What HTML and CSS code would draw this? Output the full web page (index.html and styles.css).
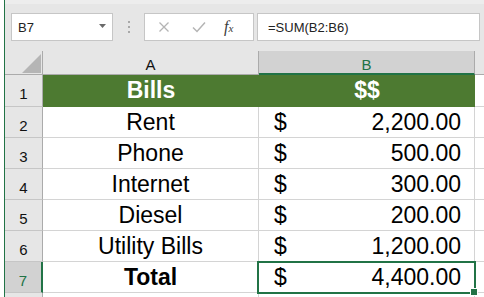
FILE: index.html
```html
<!DOCTYPE html>
<html>
<head>
<meta charset="utf-8">
<link rel="stylesheet" href="styles.css">
</head>
<body>
<div class="app">
  <div class="topstrip"></div>
  <div class="toolbar">
    <div class="namebox">
      <span class="nametext">B7</span>
      <svg class="dd" width="7" height="4" viewBox="0 0 7 4"><path d="M0 0H7L3.5 4Z" fill="#6a6a6a"/></svg>
    </div>
    <div class="dots"><span></span><span></span><span></span></div>
    <div class="fbtns">
      <svg class="ic" width="12" height="12" viewBox="0 0 12 12"><path d="M1.5 1.5L10.5 10.5M10.5 1.5L1.5 10.5" stroke="#b4b4b4" stroke-width="1.3" fill="none"/></svg>
      <svg class="ic" width="14" height="12" viewBox="0 0 14 12"><path d="M1 6.5L5 10.5L13 1.5" stroke="#b4b4b4" stroke-width="1.5" fill="none"/></svg>
      <span class="fx">f<span class="fxx">x</span></span>
    </div>
    <div class="finput">=SUM(B2:B6)</div>
  </div>
  <div class="grid">
    <div class="corner"><svg width="19" height="19" viewBox="0 0 19 19"><path d="M19 0V19H0Z" fill="#b5b5b5"/></svg></div>
    <div class="colh">A</div>
    <div class="colh sel">B</div>
    <div class="colh rest"></div>

    <div class="rowh r1">1</div>
    <div class="cell hdr">Bills</div>
    <div class="cell hdr">$$</div>
    <div class="cell hdr rest"></div>

    <div class="rowh">2</div>
    <div class="cell ca">Rent</div>
    <div class="cell cb"><span>$</span><span>2,200.00</span></div>
    <div class="cell rest"></div>

    <div class="rowh">3</div>
    <div class="cell ca">Phone</div>
    <div class="cell cb"><span>$</span><span>500.00</span></div>
    <div class="cell rest"></div>

    <div class="rowh">4</div>
    <div class="cell ca">Internet</div>
    <div class="cell cb"><span>$</span><span>300.00</span></div>
    <div class="cell rest"></div>

    <div class="rowh">5</div>
    <div class="cell ca">Diesel</div>
    <div class="cell cb"><span>$</span><span>200.00</span></div>
    <div class="cell rest"></div>

    <div class="rowh">6</div>
    <div class="cell ca">Utility Bills</div>
    <div class="cell cb"><span>$</span><span>1,200.00</span></div>
    <div class="cell rest"></div>

    <div class="rowh selr">7</div>
    <div class="cell ca bold">Total</div>
    <div class="cell cb active"><span>$</span><span>4,400.00</span></div>
    <div class="cell rest"></div>

    <div class="rowh tail"></div>
    <div class="cell tail"></div>
    <div class="cell tail"></div>
    <div class="cell rest tail"></div>
  </div>
</div>
</body>
</html>
```

FILE: styles.css
```css
* { box-sizing: border-box; }
html, body { margin: 0; padding: 0; }
body {
  width: 484px;
  height: 297px;
  overflow: hidden;
  background: #ffffff;
  font-family: "Liberation Sans", Arial, sans-serif;
}
.app {
  margin-left: 4px;
  border-left: 1px solid #217346;
  height: 297px;
  overflow: hidden;
  background: #e6e6e6;
}
.topstrip {
  height: 4px;
  background: #ededed;
}
.toolbar {
  height: 47px;
  display: flex;
  align-items: flex-start;
  padding-top: 9px;
}
.namebox {
  margin-left: 6px;
  width: 102px;
  height: 28px;
  background: #fff;
  border: 1px solid #c6c6c6;
  display: flex;
  align-items: center;
  justify-content: space-between;
  padding: 0 6px 0 6px;
}
.nametext {
  font-size: 13px;
  color: #222;
  padding-top: 1px;
}
.dd { margin-top: -2px; }
.dots {
  width: 31px;
  height: 28px;
  display: flex;
  flex-direction: column;
  align-items: center;
  justify-content: center;
  gap: 3px;
}
.dots span {
  width: 2px;
  height: 2px;
  background: #a8a8a8;
}
.fbtns {
  width: 110px;
  height: 28px;
  background: #fff;
  border: 1px solid #c6c6c6;
  display: flex;
  align-items: center;
  padding-left: 13px;
  gap: 22px;
}
.fx {
  font-family: "Liberation Serif", "Times New Roman", serif;
  font-style: italic;
  font-size: 16px;
  color: #3c3c3c;
  margin-left: -4px;
}
.fxx { font-size: 11px; }
.finput {
  margin-left: 3px;
  width: 223px;
  height: 28px;
  background: #fff;
  border: 1px solid #c6c6c6;
  font-size: 13px;
  color: #222;
  padding-left: 10px;
  line-height: 28px;
}
.grid {
  display: grid;
  grid-template-columns: 38px 216px 216px 1fr;
  grid-template-rows: 24px 32px repeat(6, 31px) 31px;
  height: 277px;
}
.corner {
  border-right: 1px solid #ababab;
  border-bottom: 1px solid #ababab;
  display: flex;
  align-items: flex-end;
  justify-content: flex-end;
  padding: 0 1px 1px 0;
}
.colh {
  background: #e6e6e6;
  border-right: 1px solid #ababab;
  border-bottom: 1px solid #ababab;
  text-align: center;
  font-size: 15px;
  line-height: 20px;
  padding-top: 4px;
  color: #111;
}
.colh.sel {
  background: #d2d2d2;
  color: #217346;
  border-bottom: 2px solid #217346;
}
.colh.rest {
  background: #e6e6e6;
  border-right: none;
}
.rowh {
  background: #e6e6e6;
  border-right: 1px solid #ababab;
  border-bottom: 1px solid #c6c6c6;
  text-align: center;
  font-size: 15px;
  line-height: 22px;
  padding-top: 8px;
  color: #111;
}
.rowh.selr {
  background: #d2d2d2;
  color: #217346;
  border-right: 2px solid #217346;
}
.cell {
  background: #fff;
  border-right: 1px solid #d4d4d4;
  border-bottom: 1px solid #d4d4d4;
  font-size: 23px;
  line-height: 30px;
  color: #000;
  white-space: nowrap;
}
.cell.rest { border-right: none; }
.cell.hdr {
  background: #4d7a31;
  border-right: none;
  border-bottom: 1px solid #4d7a31;
  color: #fff;
  font-weight: bold;
  text-align: center;
  line-height: 31px;
}
.cell.hdr.rest { background: #fff; border-bottom: 1px solid #d4d4d4; }
.ca { text-align: center; }
.bold { font-weight: bold; }
.cb {
  display: flex;
  justify-content: space-between;
  padding: 0 13px 0 15px;
}
.active { position: relative; }
.active::after {
  content: "";
  position: absolute;
  left: -2px;
  top: -1px;
  right: -2px;
  bottom: -2px;
  border: 2px solid #217346;
}
.active::before {
  content: "";
  position: absolute;
  right: -4px;
  bottom: -4px;
  width: 6px;
  height: 6px;
  background: #217346;
  border: 1px solid #fff;
  z-index: 2;
}
```
